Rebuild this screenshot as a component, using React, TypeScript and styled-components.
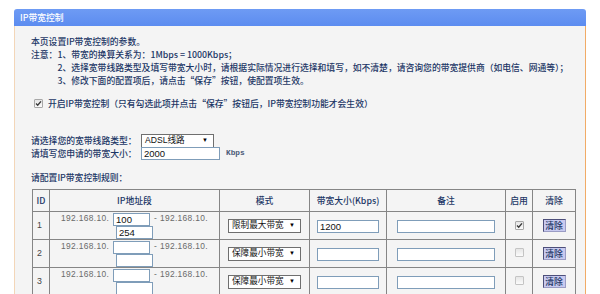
import React from 'react';
import styled, { createGlobalStyle } from 'styled-components';

const GlobalStyle = createGlobalStyle`
  html, body {
    margin: 0;
    padding: 0;
    background: #ffffff;
  }
  body {
    font-family: "Noto Sans CJK SC", "Noto Sans", sans-serif;
    font-size: 8.8px;
    font-weight: 500;
    color: #1c3766;
    overflow: hidden;
  }
`;

const Page = styled.div`
  padding: 9px 0 0 14px;
  width: 572px;
`;

const Panel = styled.section`
  display: flex;
  flex-direction: column;
`;

const PanelHeader = styled.div`
  height: 17px;
  display: flex;
  align-items: center;
  padding-left: 6px;
  background: linear-gradient(#6e9bf4, #5c8cf0);
  color: #ffffff;
  border-radius: 3px 3px 0 0;
`;

const PanelBody = styled.div`
  background: #f4f4f4;
  border-left: 1px solid #f3d6b8;
  border-right: 1px solid #f1ab66;
  padding: 9px 16px 0 16px;
  line-height: 13px;
  height: 280px;
`;

const Line = styled.div`
  white-space: nowrap;
`;

const Notes = styled.div`
  display: flex;
  white-space: nowrap;
`;

const NoteList = styled.ol`
  list-style: none;
  margin: 0;
  padding: 0;
`;

const CheckRow = styled.label`
  display: flex;
  align-items: center;
  gap: 5px;
  margin-top: 10px;
  padding-left: 3px;
  white-space: nowrap;
`;

const BoxMark = styled.span<{ $muted?: boolean }>`
  display: inline-flex;
  align-items: center;
  justify-content: center;
  width: 9px;
  height: 9px;
  box-sizing: border-box;
  border: 1px solid ${(p) => (p.$muted ? '#c4c4c4' : '#a8a8a8')};
  border-radius: 1px;
  background: linear-gradient(#e6e6e6, #fbfbfb);
`;

const FormGrid = styled.div`
  display: grid;
  grid-template-columns: 110px auto;
  justify-content: start;
  align-items: center;
  margin-top: 24px;
`;

const Control = styled.div`
  display: flex;
  align-items: center;
  gap: 6px;
  height: 13px;
`;

const SelectBox = styled.span<{ $width: number }>`
  display: inline-flex;
  align-items: center;
  justify-content: space-between;
  width: ${(p) => p.$width}px;
  height: 14px;
  box-sizing: border-box;
  border: 1px solid #6f6f6f;
  background: #ffffff;
  padding: 0 5px 0 3px;
  font-family: "Liberation Sans", "Noto Sans CJK SC", sans-serif;
  font-size: 8.6px;
  font-weight: normal;
  color: #111111;
  white-space: nowrap;
`;

const Arrow = styled.span`
  font-size: 6px;
  color: #000000;
`;

const TextInput = styled.input<{ $width: number }>`
  width: ${(p) => p.$width}px;
  height: 13px;
  box-sizing: border-box;
  border: 1px solid #7f9db9;
  background: #ffffff;
  padding: 0 2px;
  margin: 0;
  font-family: "Liberation Sans", sans-serif;
  font-size: 9.5px;
  color: #111111;
  vertical-align: middle;
  outline: none;
`;

const Unit = styled.span`
  font-family: "Liberation Mono", monospace;
  font-size: 7.8px;
  font-weight: bold;
  color: #4a5a78;
`;

const RulesTitle = styled.div`
  margin-top: 11px;
`;

const RulesTable = styled.table`
  margin: 5px 0 0 1px;
  width: 536px;
  border-collapse: collapse;
  table-layout: fixed;
  border: 1px solid #858585;
`;

const Th = styled.th<{ $width: number }>`
  width: ${(p) => p.$width}px;
  height: 21px;
  padding: 0;
  border: 1px solid #858585;
  font-weight: 500;
  text-align: center;
  white-space: nowrap;
`;

const Td = styled.td<{ $align?: string }>`
  height: 27px;
  padding: 0;
  border: 1px solid #858585;
  text-align: ${(p) => p.$align || 'center'};
  vertical-align: middle;
  white-space: nowrap;
`;

const IdCell = styled(Td)`
  padding-left: 4px;
  color: #444444;
  font-family: "Liberation Sans", sans-serif;
  font-weight: normal;
`;

const IpRange = styled.div`
  display: flex;
  flex-wrap: wrap;
  justify-content: center;
  align-items: flex-start;
  column-gap: 4px;
  line-height: 13px;
`;

const IpText = styled.span`
  font-family: "Liberation Sans", sans-serif;
  font-size: 8.4px;
  font-weight: normal;
  letter-spacing: 0.35px;
  color: #6a6a6a;
  line-height: 11px;
`;

const ClearButton = styled.button`
  width: 23px;
  height: 13px;
  padding: 0;
  margin: 0;
  border: 1px solid #4d4f7a;
  border-right-color: #9a9cc4;
  border-bottom-color: #9a9cc4;
  background: #c8caf0;
  font-family: "Noto Sans CJK SC", sans-serif;
  font-size: 8.8px;
  font-weight: 500;
  line-height: 11px;
  color: #1c3766;
`;

const Check = ({ checked, muted }: { checked?: boolean; muted?: boolean }) => (
  <BoxMark $muted={muted}>
    {checked && (
      <svg width="7" height="7" viewBox="0 0 7 7">
        <path d="M1 3.6 L2.7 5.3 L6 1.4" stroke="#3a3a3a" strokeWidth="1.4" fill="none" />
      </svg>
    )}
  </BoxMark>
);

type Rule = { id: number; start: string; end: string; mode: string; bw: string; enabled: boolean };

const rules: Rule[] = [
  { id: 1, start: '100', end: '254', mode: '限制最大带宽', bw: '1200', enabled: true },
  { id: 2, start: '', end: '', mode: '保障最小带宽', bw: '', enabled: false },
  { id: 3, start: '', end: '', mode: '保障最小带宽', bw: '', enabled: false },
];

export default function App() {
  return (
    <>
      <GlobalStyle />
      <Page>
        <Panel>
          <PanelHeader>IP带宽控制</PanelHeader>
          <PanelBody>
            <Line>本页设置IP带宽控制的参数。</Line>
            <Notes>
              <span>注意：</span>
              <NoteList>
                <li>1、带宽的换算关系为：1Mbps = 1000Kbps；</li>
                <li>2、选择宽带线路类型及填写带宽大小时，请根据实际情况进行选择和填写，如不清楚，请咨询您的带宽提供商（如电信、网通等）；</li>
                <li>3、修改下面的配置项后，请点击“保存”按钮，使配置项生效。</li>
              </NoteList>
            </Notes>
            <CheckRow>
              <Check checked />
              <span>开启IP带宽控制（只有勾选此项并点击“保存”按钮后，IP带宽控制功能才会生效）</span>
            </CheckRow>
            <FormGrid>
              <span>请选择您的宽带线路类型：</span>
              <Control>
                <SelectBox $width={73}>
                  ADSL线路 <Arrow>▼</Arrow>
                </SelectBox>
              </Control>
              <span>请填写您申请的带宽大小：</span>
              <Control>
                <TextInput $width={79} defaultValue="2000" />
                <Unit>Kbps</Unit>
              </Control>
            </FormGrid>
            <RulesTitle>请配置IP带宽控制规则：</RulesTitle>
            <RulesTable>
              <thead>
                <tr>
                  <Th $width={16}>ID</Th>
                  <Th $width={169}>IP地址段</Th>
                  <Th $width={89}>模式</Th>
                  <Th $width={76}>带宽大小(Kbps)</Th>
                  <Th $width={118}>备注</Th>
                  <Th $width={26}>启用</Th>
                  <Th $width={42}>清除</Th>
                </tr>
              </thead>
              <tbody>
                {rules.map((r) => (
                  <tr key={r.id}>
                    <IdCell $align="left">{r.id}</IdCell>
                    <Td>
                      <IpRange>
                        <IpText>192.168.10.</IpText>
                        <TextInput $width={37} defaultValue={r.start} />
                        <IpText>- 192.168.10.</IpText>
                        <TextInput $width={37} defaultValue={r.end} />
                      </IpRange>
                    </Td>
                    <Td>
                      <SelectBox $width={73}>
                        {r.mode} <Arrow>▼</Arrow>
                      </SelectBox>
                    </Td>
                    <Td>
                      <TextInput $width={62} defaultValue={r.bw} />
                    </Td>
                    <Td>
                      <TextInput $width={98} defaultValue="" />
                    </Td>
                    <Td>
                      <Check checked={r.enabled} muted={!r.enabled} />
                    </Td>
                    <Td>
                      <ClearButton type="button">清除</ClearButton>
                    </Td>
                  </tr>
                ))}
              </tbody>
            </RulesTable>
          </PanelBody>
        </Panel>
      </Page>
    </>
  );
}
